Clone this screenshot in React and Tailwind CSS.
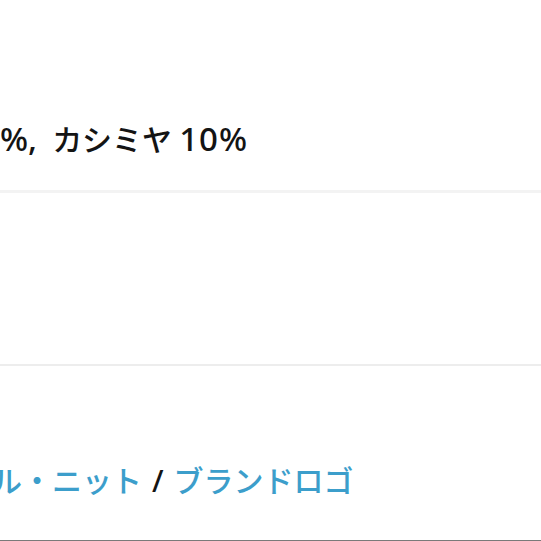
export default function App() {
  return (
    <div
      className="w-[541px] h-[541px] overflow-hidden bg-white flex flex-col"
      style={{ fontFamily: '"Noto Sans", "Noto Sans CJK JP", sans-serif' }}
    >
      <section className="h-[190px] shrink-0 pt-[122px]">
        <p className="leading-[34px] font-medium text-[#141414] whitespace-nowrap">
          <span className="text-[33px]">%,</span>
          <span className="text-[30px] ml-[15px]">カシミヤ</span>
          <span className="text-[33px] tracking-[1px] ml-[7px]">10%</span>
        </p>
      </section>
      <div className="h-[3px] shrink-0 bg-[#f3f3f3]" />
      <section className="h-[171px] shrink-0" />
      <div className="h-[2px] shrink-0 bg-[#ededed]" />
      <section className="flex-1 pt-[100px]">
        <p className="text-[30px] leading-[30px] font-medium whitespace-nowrap -ml-[8px]">
          <a className="text-[#3c9ecb]">ル・ニット</a>
          <span className="text-[#141414] mx-[10px]">/</span>
          <a className="text-[#3c9ecb]">ブランドロゴ</a>
        </p>
      </section>
      <div className="h-[1px] shrink-0 bg-[#7a7a7a]" />
    </div>
  );
}
